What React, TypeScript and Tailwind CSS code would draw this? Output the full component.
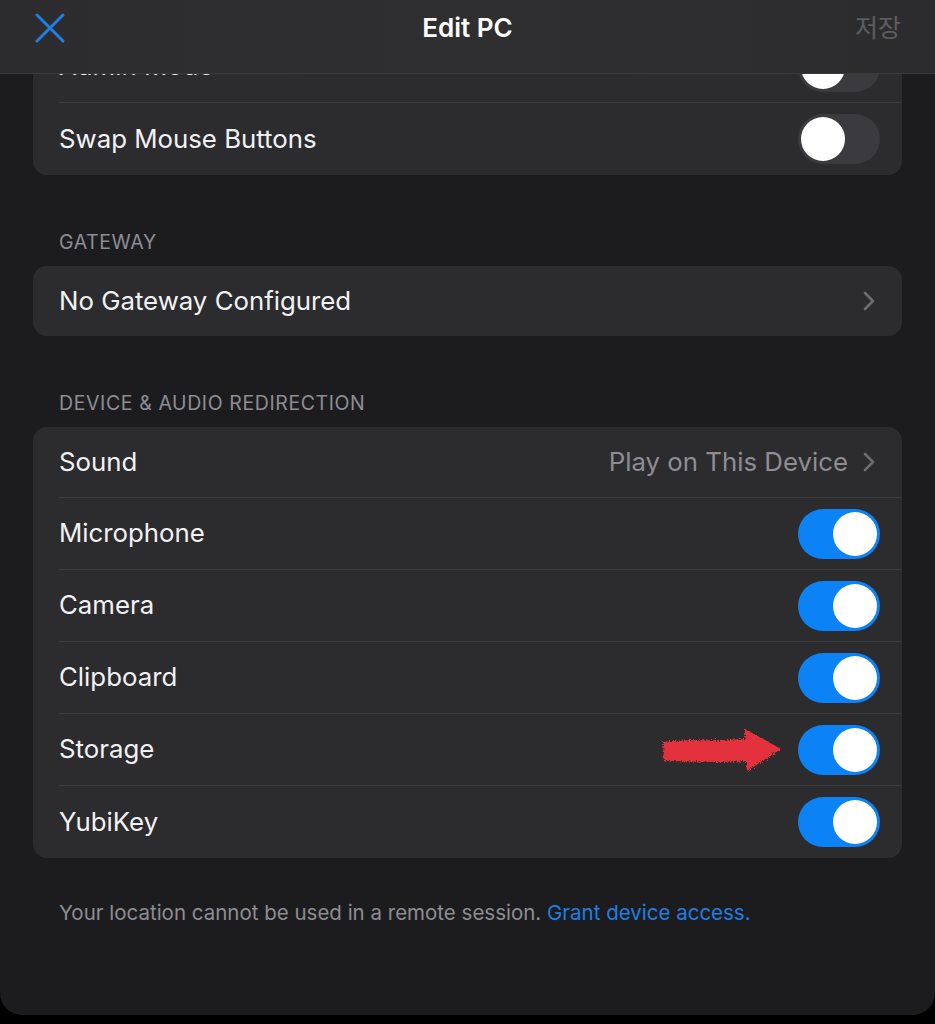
import React from "react";

const font = { fontFamily: '"Inter", "Noto Sans CJK KR", sans-serif' };

function Toggle({ on }: { on: boolean }) {
  return (
    <div
      className={`relative flex h-[50px] w-[82px] shrink-0 items-center rounded-full px-[3px] ${
        on ? "justify-end bg-[#0b82f5]" : "justify-start bg-[#3b3b3f]"
      }`}
    >
      <div className="h-[44px] w-[44px] rounded-full bg-white" />
    </div>
  );
}

function Chevron() {
  return (
    <svg width="14" height="22" viewBox="0 0 14 22" className="shrink-0">
      <path d="M3 3 L11 11 L3 19" fill="none" stroke="#6b6b70" strokeWidth="2.6" strokeLinecap="round" strokeLinejoin="round" />
    </svg>
  );
}

function Row({
  label,
  children,
  divider = true,
}: {
  label: string;
  children?: React.ReactNode;
  divider?: boolean;
}) {
  return (
    <div className="flex h-[72px] items-stretch pl-[26px]">
      <div
        className={`flex flex-1 items-center justify-between pr-[22px] ${
          divider ? "border-b border-[#3d3d41]" : ""
        }`}
      >
        <span className="text-[25.8px] text-[#f2f2f4]">{label}</span>
        {children}
      </div>
    </div>
  );
}

function SectionHeader({ text }: { text: string }) {
  return (
    <div className="mt-[55px] mb-[12px] pl-[59px] text-[19.5px] leading-[24px] tracking-[0.6px] text-[#8d8d93]">
      {text}
    </div>
  );
}

function RedArrow() {
  return (
    <svg width="126" height="52" viewBox="0 0 126 52" className="absolute left-[659px] top-[724px]">
      <defs>
        <filter id="rough" x="-10%" y="-20%" width="120%" height="140%">
          <feTurbulence type="fractalNoise" baseFrequency="0.7" numOctaves="3" result="n" />
          <feDisplacementMap in="SourceGraphic" in2="n" scale="6" />
        </filter>
      </defs>
      <path
        d="M4 18 C30 15 60 17 86 15 L86 5 L122 25 L88 47 L87 37 C60 39 30 37 5 37 Z"
        fill="#e3323d"
        filter="url(#rough)"
      />
    </svg>
  );
}

export default function App() {
  return (
    <div className="h-[1024px] w-[935px] bg-black" style={font}>
      <div className="relative h-[1015px] overflow-hidden rounded-b-[22px] bg-[#1c1c1e]">
        {/* header overlay */}
        <div className="absolute left-0 right-0 top-0 z-10 flex h-[74px] items-center justify-center border-b border-[#3a3a3d] bg-gradient-to-r from-[#2c2c2e] via-[#2f2f31] to-[#2c2c2e]">
          <svg width="30" height="30" viewBox="0 0 30 30" className="absolute left-[35px] top-[13px]">
            <path d="M2 2 L28 28 M28 2 L2 28" stroke="#1f7fe3" strokeWidth="3" strokeLinecap="round" />
          </svg>
          <span className="pb-[18px] text-[26px] font-semibold text-white">Edit PC</span>
          <span className="absolute right-[34px] top-[10px] text-[25px] text-[#5d5d61]">저장</span>
        </div>

        <div className="pt-[31px]">
          <div className="mx-[33px] overflow-hidden rounded-[14px] bg-[#2c2c2e]">
            <Row label="Admin Mode">
              <Toggle on={false} />
            </Row>
            <Row label="Swap Mouse Buttons" divider={false}>
              <Toggle on={false} />
            </Row>
          </div>

          <SectionHeader text="GATEWAY" />
          <div className="mx-[33px] overflow-hidden rounded-[14px] bg-[#2c2c2e]">
            <div className="flex h-[70px] items-center justify-between pl-[26px] pr-[26px]">
              <span className="text-[25.8px] text-[#f2f2f4]">No Gateway Configured</span>
              <Chevron />
            </div>
          </div>

          <SectionHeader text="DEVICE & AUDIO REDIRECTION" />
          <div className="mx-[33px] overflow-hidden rounded-[14px] bg-[#2c2c2e]">
            <div className="flex h-[71px] items-stretch pl-[26px]">
              <div className="flex flex-1 items-center justify-between border-b border-[#3d3d41] pr-[26px]">
                <span className="text-[25.8px] text-[#f2f2f4]">Sound</span>
                <div className="flex items-center gap-[14px]">
                  <span className="text-[25.8px] text-[#8d8d93]">Play on This Device</span>
                  <Chevron />
                </div>
              </div>
            </div>
            <Row label="Microphone">
              <Toggle on />
            </Row>
            <Row label="Camera">
              <Toggle on />
            </Row>
            <Row label="Clipboard">
              <Toggle on />
            </Row>
            <Row label="Storage">
              <Toggle on />
            </Row>
            <Row label="YubiKey" divider={false}>
              <Toggle on />
            </Row>
          </div>

          <div className="mt-[43px] pl-[59px] text-[20.5px] leading-[24px] text-[#8d8d93]">
            Your location cannot be used in a remote session.{" "}
            <span className="text-[#1f7fe3]">Grant device access.</span>
          </div>
        </div>

        <RedArrow />
      </div>
    </div>
  );
}
